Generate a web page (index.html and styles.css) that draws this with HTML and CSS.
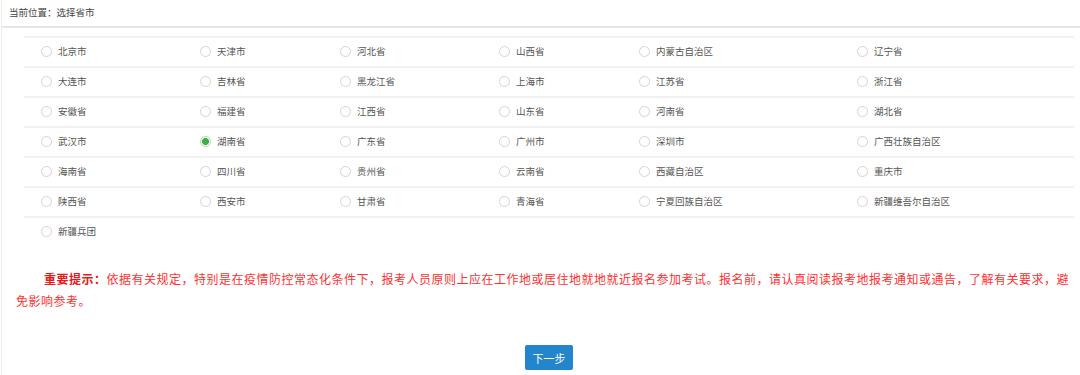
FILE: index.html
```html
<!DOCTYPE html>
<html lang="zh-CN">
<head>
<meta charset="utf-8">
<title>选择省市</title>
<link rel="stylesheet" href="styles.css">
</head>
<body>
<div class="page">
  <div class="crumb">当前位置：选择省市</div>
  <div class="list">
    <div class="row">
      <label class="opt"><span class="radio"></span>北京市</label>
      <label class="opt"><span class="radio"></span>天津市</label>
      <label class="opt"><span class="radio"></span>河北省</label>
      <label class="opt"><span class="radio"></span>山西省</label>
      <label class="opt"><span class="radio"></span>内蒙古自治区</label>
      <label class="opt"><span class="radio"></span>辽宁省</label>
    </div>
    <div class="row">
      <label class="opt"><span class="radio"></span>大连市</label>
      <label class="opt"><span class="radio"></span>吉林省</label>
      <label class="opt"><span class="radio"></span>黑龙江省</label>
      <label class="opt"><span class="radio"></span>上海市</label>
      <label class="opt"><span class="radio"></span>江苏省</label>
      <label class="opt"><span class="radio"></span>浙江省</label>
    </div>
    <div class="row">
      <label class="opt"><span class="radio"></span>安徽省</label>
      <label class="opt"><span class="radio"></span>福建省</label>
      <label class="opt"><span class="radio"></span>江西省</label>
      <label class="opt"><span class="radio"></span>山东省</label>
      <label class="opt"><span class="radio"></span>河南省</label>
      <label class="opt"><span class="radio"></span>湖北省</label>
    </div>
    <div class="row">
      <label class="opt"><span class="radio"></span>武汉市</label>
      <label class="opt"><span class="radio checked"></span>湖南省</label>
      <label class="opt"><span class="radio"></span>广东省</label>
      <label class="opt"><span class="radio"></span>广州市</label>
      <label class="opt"><span class="radio"></span>深圳市</label>
      <label class="opt"><span class="radio"></span>广西壮族自治区</label>
    </div>
    <div class="row">
      <label class="opt"><span class="radio"></span>海南省</label>
      <label class="opt"><span class="radio"></span>四川省</label>
      <label class="opt"><span class="radio"></span>贵州省</label>
      <label class="opt"><span class="radio"></span>云南省</label>
      <label class="opt"><span class="radio"></span>西藏自治区</label>
      <label class="opt"><span class="radio"></span>重庆市</label>
    </div>
    <div class="row">
      <label class="opt"><span class="radio"></span>陕西省</label>
      <label class="opt"><span class="radio"></span>西安市</label>
      <label class="opt"><span class="radio"></span>甘肃省</label>
      <label class="opt"><span class="radio"></span>青海省</label>
      <label class="opt"><span class="radio"></span>宁夏回族自治区</label>
      <label class="opt"><span class="radio"></span>新疆维吾尔自治区</label>
    </div>
    <div class="row last">
      <label class="opt"><span class="radio"></span>新疆兵团</label>
    </div>
  </div>
  <p class="notice"><span class="key">重要提示：</span>依据有关规定，特别是在疫情防控常态化条件下，报考人员原则上应在工作地或居住地就地就近报名参加考试。报名前，请认真阅读报考地报考通知或通告，了解有关要求，避免影响参考。</p>
  <div class="actions">
    <button class="btn" type="button">下一步</button>
  </div>
</div>
</body>
</html>
```

FILE: styles.css
```css
* { box-sizing: border-box; }
html, body { margin: 0; padding: 0; background: #fff; }
body {
  font-family: "Noto Sans CJK SC", "Noto Sans", sans-serif;
  color: #555;
}
.page {
  border-left: 1px solid #ececec;
  margin-left: 1px;
  min-height: 375px;
}
.crumb {
  height: 28px;
  padding: 5px 0 0 7px;
  font-size: 9.5px;
  line-height: 14px;
  color: #444;
  border-bottom: 2px solid #e6e6e6;
}
.list {
  margin: 8px 0 0 22px;
  width: 1050px;
}
.row {
  display: grid;
  grid-template-columns: 159px 140px 159px 140px 218px 234px;
  height: 30px;
  border-top: 2px solid #f1f1f1;
}
.opt {
  display: flex;
  align-items: center;
  padding-left: 17px;
  padding-bottom: 2px;
  font-size: 9.5px;
  color: #555;
  white-space: nowrap;
}
.radio {
  width: 11px;
  height: 11px;
  border: 1px solid #d4d4d4;
  border-radius: 50%;
  background: #fff;
  margin-right: 6px;
  flex: none;
}
.radio.checked {
  border-color: #a8dba8;
  background: radial-gradient(circle, #3cb043 0 3.2px, #fff 3.8px);
}
.notice {
  margin: 22px 0 0 14px;
  width: 1064px;
  font-size: 12px;
  line-height: 22px;
  letter-spacing: 0.5px;
  word-spacing: 0;
  text-indent: 28px;
  color: #ff3030;
}
.key { font-weight: 700; color: #e81818; }
.actions {
  margin: 33px 0 0 22px;
  width: 1050px;
  display: flex;
  justify-content: center;
}
.btn {
  width: 48px;
  height: 25px;
  border: none;
  border-radius: 2px;
  background: #2386cc;
  color: #fff;
  font-family: inherit;
  font-size: 11px;
  padding: 0;
}
```
